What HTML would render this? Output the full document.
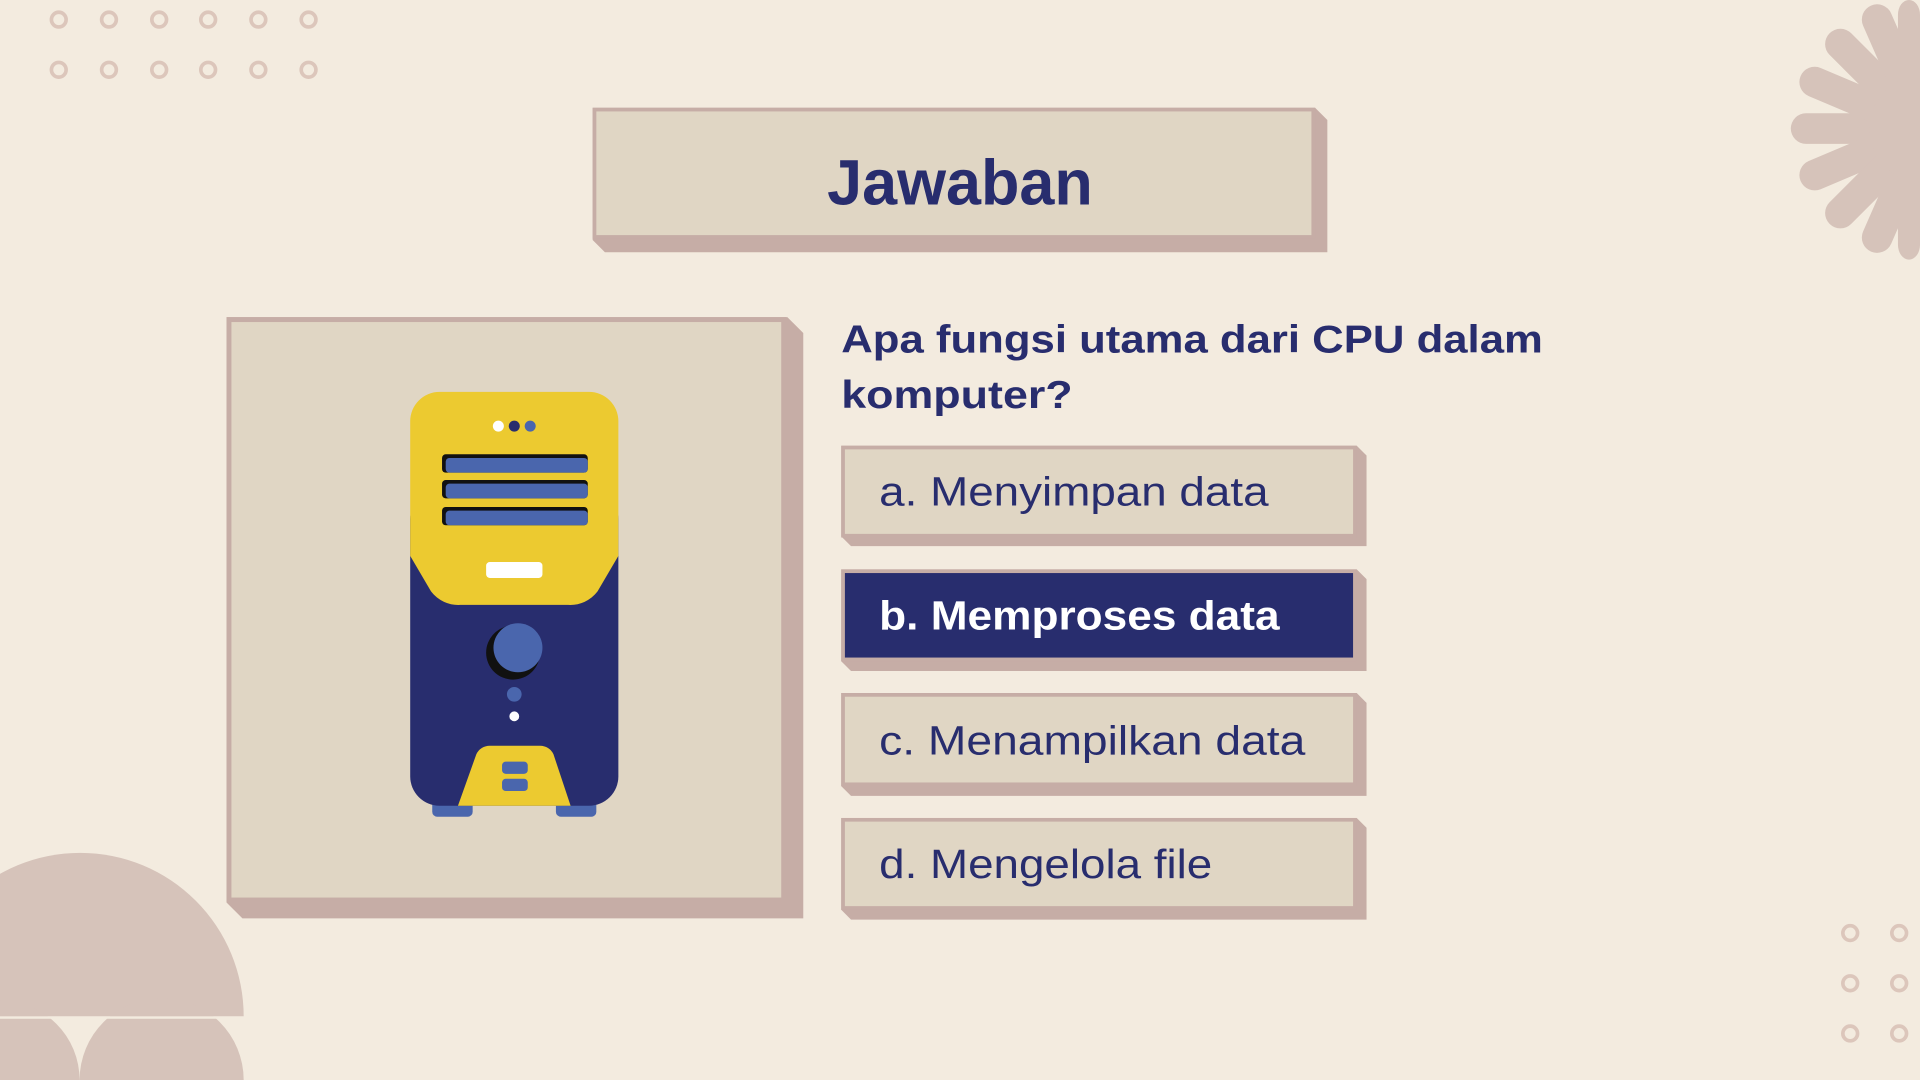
<!DOCTYPE html>
<html><head><meta charset="utf-8"><style>
html,body{margin:0;padding:0;background:#f3ebdf;width:1920px;height:1080px;overflow:hidden;position:relative}
svg{display:block;overflow:hidden;position:absolute;left:0;top:0}
</style></head><body>
<svg width="1920" height="1080" viewBox="0 0 1568 882" xmlns="http://www.w3.org/2000/svg">
<rect width="1568" height="882" fill="#f3ebdf"/>
<g fill="none" stroke="#dcc6bb" stroke-width="3">
<circle cx="48" cy="16" r="6"/><circle cx="89" cy="16" r="6"/><circle cx="130" cy="16" r="6"/><circle cx="170" cy="16" r="6"/><circle cx="211" cy="16" r="6"/><circle cx="252" cy="16" r="6"/>
<circle cx="48" cy="57" r="6"/><circle cx="89" cy="57" r="6"/><circle cx="130" cy="57" r="6"/><circle cx="170" cy="57" r="6"/><circle cx="211" cy="57" r="6"/><circle cx="252" cy="57" r="6"/>
<circle cx="1511" cy="762" r="6"/><circle cx="1551" cy="762" r="6"/>
<circle cx="1511" cy="803" r="6"/><circle cx="1551" cy="803" r="6"/>
<circle cx="1511" cy="844" r="6"/><circle cx="1551" cy="844" r="6"/>
</g>
<g stroke="#d6c3ba" stroke-width="25" stroke-linecap="round">
<line x1="1572" y1="105" x2="1475" y2="105"/>
<line x1="1572" y1="105" x2="1482" y2="67"/>
<line x1="1572" y1="105" x2="1482" y2="143"/>
<line x1="1572" y1="105" x2="1503" y2="36"/>
<line x1="1572" y1="105" x2="1503" y2="174"/>
<line x1="1572" y1="105" x2="1533" y2="16"/>
<line x1="1572" y1="105" x2="1533" y2="194"/>
</g>
<circle cx="1572" cy="105" r="45" fill="#d6c3ba"/>
<rect x="1550" y="0" width="18" height="212" rx="12" fill="#d6c3ba"/>
<g fill="#d6c3ba">
<path d="M-68 830 A133 133 0 0 1 199 830 Z"/>
<path d="M-65 882 A65 65 0 0 1 65 882 Z"/>
<path d="M65 882 A67 67 0 0 1 199 882 Z"/>
</g>
<rect x="0" y="830" width="200" height="2" fill="#f3ebdf"/>
<polygon points="484,88 1074,88 1084,98 1084,206 494,206 484,196" fill="#c6ada6"/>
<rect x="485.5" y="89.5" width="587" height="104" fill="#e0d6c4" stroke="#c6ada6" stroke-width="3"/>
<text x="784" y="167" text-anchor="middle" font-family="Liberation Sans, sans-serif" font-weight="bold" font-size="52" fill="#282d6e" textLength="217" lengthAdjust="spacingAndGlyphs">Jawaban</text>
<polygon points="185,259 643,259 656,272 656,750 198,750 185,737" fill="#c6ada6"/>
<rect x="187" y="261" width="453" height="474" fill="#e0d6c4" stroke="#c6ada6" stroke-width="4"/>
<rect x="353" y="650" width="33" height="17" rx="4" fill="#4a66ad"/>
<rect x="454" y="650" width="33" height="17" rx="4" fill="#4a66ad"/>
<rect x="335" y="400" width="170" height="258" rx="24" fill="#282d6e"/>
<path d="M359 320 H481 A24 24 0 0 1 505 344 V454 L488 483 A28 28 0 0 1 464 494 H376 A28 28 0 0 1 352 483 L335 454 V344 A24 24 0 0 1 359 320 Z" fill="#ecca30"/>
<circle cx="407" cy="348" r="4.5" fill="#fff"/><circle cx="420" cy="348" r="4.5" fill="#282d6e"/><circle cx="433" cy="348" r="4.5" fill="#4a66ad"/>
<g><rect x="361" y="371" width="119" height="15" rx="3" fill="#111"/><rect x="364" y="374" width="116" height="12" rx="3" fill="#4a66ad"/>
<rect x="361" y="392" width="119" height="15" rx="3" fill="#111"/><rect x="364" y="395" width="116" height="12" rx="3" fill="#4a66ad"/>
<rect x="361" y="414" width="119" height="15" rx="3" fill="#111"/><rect x="364" y="417" width="116" height="12" rx="3" fill="#4a66ad"/></g>
<rect x="397" y="459" width="46" height="13" rx="3" fill="#fff"/>
<circle cx="419" cy="533" r="22" fill="#111"/>
<circle cx="423" cy="529" r="20" fill="#4a66ad"/>
<circle cx="420" cy="567" r="6" fill="#4a66ad"/>
<circle cx="420" cy="585" r="4" fill="#fff"/>
<path d="M374 658 L389 616 A12 12 0 0 1 400 609 H441 A12 12 0 0 1 452 616 L466 658 Z" fill="#ecca30"/>
<rect x="410" y="622" width="21" height="10" rx="3" fill="#4a66ad"/>
<rect x="410" y="636" width="21" height="10" rx="3" fill="#4a66ad"/>
<g font-family="Liberation Sans, sans-serif" font-weight="bold" font-size="32" fill="#282d6e">
<text x="687" y="288" textLength="573" lengthAdjust="spacingAndGlyphs">Apa fungsi utama dari CPU dalam</text>
<text x="687" y="333" textLength="189" lengthAdjust="spacingAndGlyphs">komputer?</text>
</g>
<g font-family="Liberation Sans, sans-serif" font-size="33">
<polygon points="687,364 1108,364 1116,372 1116,446 695,446 687,438" fill="#c6ada6"/>
<rect x="688.5" y="365.5" width="418" height="72" fill="#e0d6c4" stroke="#c6ada6" stroke-width="3"/>
<text x="718" y="413" fill="#282d6e" textLength="318" lengthAdjust="spacingAndGlyphs">a. Menyimpan data</text>
<polygon points="687,465 1108,465 1116,473 1116,548 695,548 687,540" fill="#c6ada6"/>
<rect x="688.5" y="466.5" width="418" height="72" fill="#282d6e" stroke="#c6ada6" stroke-width="3"/>
<text x="718" y="514" fill="#fff" font-weight="bold" textLength="327" lengthAdjust="spacingAndGlyphs">b. Memproses data</text>
<polygon points="687,566 1108,566 1116,574 1116,650 695,650 687,642" fill="#c6ada6"/>
<rect x="688.5" y="567.5" width="418" height="73" fill="#e0d6c4" stroke="#c6ada6" stroke-width="3"/>
<text x="718" y="616" fill="#282d6e" textLength="348" lengthAdjust="spacingAndGlyphs">c. Menampilkan data</text>
<polygon points="687,668 1108,668 1116,676 1116,751 695,751 687,743" fill="#c6ada6"/>
<rect x="688.5" y="669.5" width="418" height="72" fill="#e0d6c4" stroke="#c6ada6" stroke-width="3"/>
<text x="718" y="717" fill="#282d6e" textLength="272" lengthAdjust="spacingAndGlyphs">d. Mengelola file</text>
</g>
</svg>
</body></html>
